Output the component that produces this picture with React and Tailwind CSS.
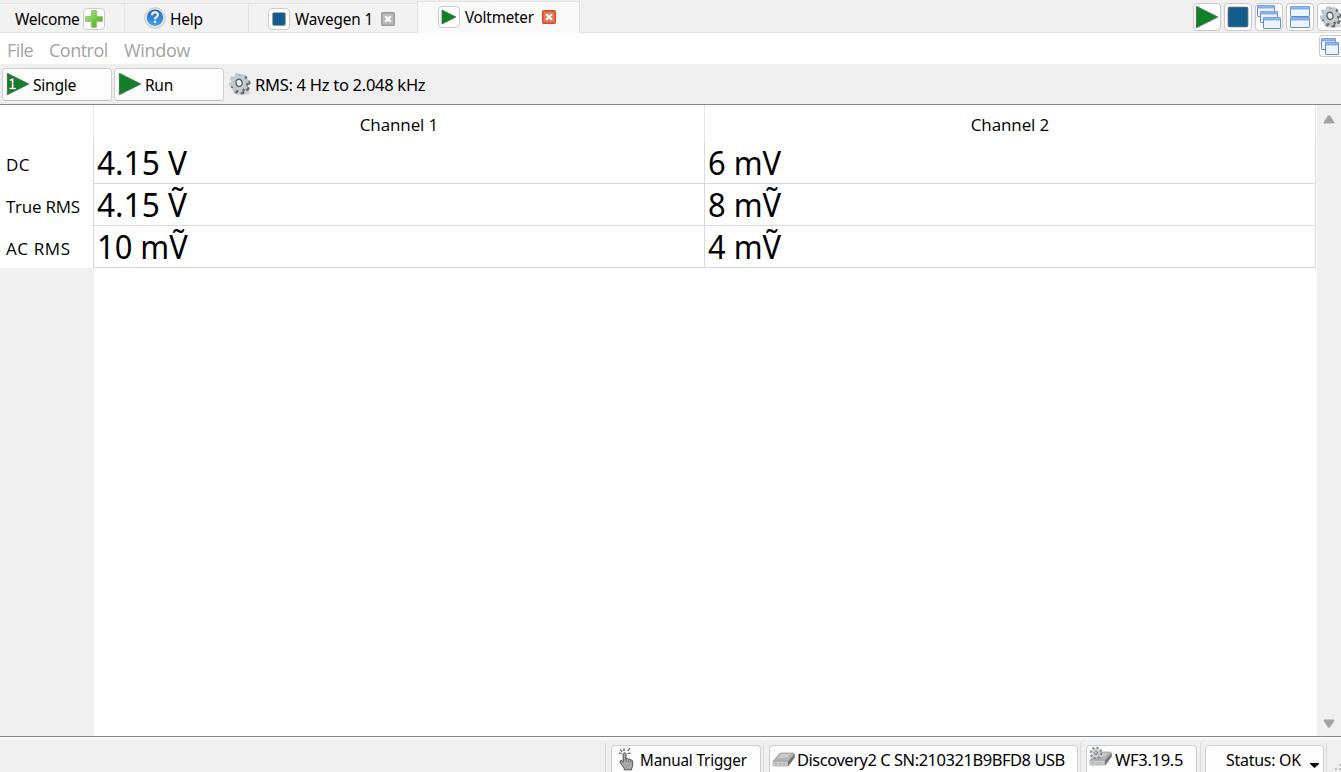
import React from "react";

const PlayIcon = ({ className, one }) => (
  <svg viewBox="0 0 24 24" className={className}>
    <path d="M1.5 1.5 L22.5 12 L1.5 22.5 Z" fill="#118128" stroke="#3f7a4c" strokeWidth="1.2" strokeLinejoin="round" />
    {one && (
      <g fill="none">
        <path d="M3.6 8.1 L6.6 7.2 V16 M3 16.6 H10" stroke="#2d5a35" strokeWidth="3.2" />
        <path d="M3.9 8.2 L6.6 7.3 V16 M3.4 16.5 H9.8" stroke="#fff" strokeWidth="1.7" />
      </g>
    )}
  </svg>
);

const StopIcon = ({ className }) => (
  <svg viewBox="0 0 24 24" className={className}>
    <rect x="1.5" y="1.5" width="21" height="21" rx="1.5" fill="#125d8d" stroke="#46657a" strokeWidth="1.5" />
  </svg>
);

const teeth = [0, 45, 90, 135, 180, 225, 270, 315];
const GearIcon = ({ className }) => (
  <svg viewBox="0 0 24 24" className={className}>
    <ellipse cx="14" cy="20.8" rx="8.5" ry="2.2" fill="#b9b9b9" opacity="0.6" />
    <g transform="rotate(-12 12.6 12.4)">
      {teeth.map((a) => (
        <rect key={a} x="10.6" y="2.4" width="4" height="4.6" rx="1" fill="#646b71" transform={`rotate(${a} 12.6 12.4)`} />
      ))}
      <circle cx="12.6" cy="12.4" r="5.6" fill="none" stroke="#646b71" strokeWidth="4" />
    </g>
    <g transform="rotate(-12 10.8 10.8)">
      {teeth.map((a) => (
        <rect key={a} x="8.7" y="1" width="4.2" height="4.6" rx="0.9" fill="#c0c7cc" transform={`rotate(${a} 10.8 10.8)`} />
      ))}
      <circle cx="10.8" cy="10.8" r="5.3" fill="none" stroke="#c4cbd0" strokeWidth="4.2" />
      <ellipse cx="11" cy="10.9" rx="3" ry="3.6" fill="#f4f4f4" stroke="#596169" strokeWidth="1.3" />
    </g>
  </svg>
);

const Pane = ({ x, y, w, h }) => (
  <g>
    <rect x={x + 0.5} y={y + 0.5} width={w - 1} height={h - 1} rx="0.6" fill="#edf4fc" stroke="#6389ce" />
    <rect x={x + 0.5} y={y + 0.5} width={w - 1} height="2.4" rx="0.6" fill="#8db8f0" stroke="#7ba2e0" />
  </g>
);
const CascadeIcon = () => (
  <svg viewBox="0 0 24 24" className="h-6 w-6 shrink-0">
    <Pane x={0} y={0} w={18} h={12} />
    <Pane x={3} y={6} w={18} h={12} />
    <Pane x={6} y={12} w={18} h={12} />
  </svg>
);
const TileIcon = () => (
  <svg viewBox="0 0 20 22" className="h-[22px] w-5 shrink-0">
    <Pane x={0} y={0} w={20} h={11} />
    <Pane x={0} y={11} w={20} h={11} />
  </svg>
);
const RestoreIcon = () => (
  <svg viewBox="0 0 18 17" className="h-[17px] w-[18px] shrink-0">
    <Pane x={0} y={0} w={15} h={12} />
    <Pane x={4} y={4} w={14} h={13} />
  </svg>
);

const PlusIcon = () => (
  <svg viewBox="0 0 18 18" className="h-[18px] w-[18px]">
    <defs>
      <linearGradient id="plus" x2="1" y2="1">
        <stop offset="0" stopColor="#b4eb84" />
        <stop offset="1" stopColor="#40a40c" />
      </linearGradient>
    </defs>
    <path d="M6.7.7h4.6v6h6v4.6h-6v6H6.7v-6h-6V6.7h6z" fill="url(#plus)" stroke="#80be61" strokeLinejoin="round" />
  </svg>
);

const HelpIcon = () => (
  <svg viewBox="0 0 22 22" className="-mt-0.5 h-[22px] w-[22px] shrink-0">
    <defs>
      <linearGradient id="help" x2="0" y2="1">
        <stop offset="0" stopColor="#2a66b4" />
        <stop offset="1" stopColor="#3aa0ee" />
      </linearGradient>
    </defs>
    <circle cx="11" cy="11" r="10.3" fill="#e6e6e6" stroke="#c8c8c8" />
    <circle cx="11" cy="10.6" r="8.2" fill="url(#help)" />
    <path d="M8 8.2c.1-3.8 6-3.8 5.9-.3 0 2-2.9 2.1-2.9 4.4" fill="none" stroke="#fff" strokeWidth="2.1" />
    <rect x="9.9" y="13.6" width="2.3" height="2.3" fill="#fff" />
  </svg>
);

const CloseIcon = ({ red }) => (
  <svg viewBox="0 0 14 14" className="-mt-px h-3.5 w-3.5 shrink-0">
    <rect x=".7" y=".7" width="12.6" height="12.6" rx="1.2" fill={red ? "#df7c55" : "#b9b9b9"} stroke={red ? "#d9442e" : "#9b9b9b"} strokeWidth="1.4" />
    <path d="M4.2 4.2l5.6 5.6M9.8 4.2L4.2 9.8" stroke="#fff" strokeWidth="2.2" />
  </svg>
);

const HandIcon = () => (
  <svg viewBox="0 0 17 24" className="-mt-0.5 h-6 w-[17px] shrink-0">
    <path d="M6 1.2v3M2.2 2.5l2 2.2M1 6.3h2.6M12 1.2L9.6 4M9.5 6.3h3" stroke="#444" strokeWidth="1.1" fill="none" />
    <path d="M5.2 7.2c0-2 2.8-2 2.8 0v5c.5-1.2 2.2-1 2.5.2.6-.8 2-.5 2.2.7.7-.5 2 .1 2 1.3v4.2c0 1.5-1.2 2-1.2 3.4v.8H6.3v-1C5.8 19.5 3 18 2.2 15.5c-.7-1.6.7-2.7 1.8-1.7l1.2 1.6z" fill="#a8a8a8" stroke="#505050" />
    <path d="M8 12v3M10.5 12.6v2.5M12.7 13.3v2.2" stroke="#606060" strokeWidth=".8" />
  </svg>
);

const DevicePaths = () => (
  <g>
    <path d="M1 9.3L7.5 1.6Q8 1 9 1H21q1.5 0 1 1L16 9.3z" fill="#b4b4b4" stroke="#9c9c9c" strokeWidth=".7" />
    <path d="M1 9.3h15V14H2.2Q1 14 1 13z" fill="#cecece" stroke="#9b9b9b" strokeWidth=".7" />
    <path d="M16 9.3L22.8 1.6v4L17 13.4l-1 .6z" fill="#747474" />
    <path d="M6 6L9.5 2h9l-3 3.5z" fill="#cccccc" />
    <path d="M3 11.5h2" stroke="#61b779" strokeWidth="1.2" />
    <path d="M6.5 11.8H14" stroke="#aaa" strokeWidth=".8" />
  </g>
);

const Corner = () => (
  <svg viewBox="0 0 7 7" className="mb-px h-[7px] w-[7px] self-end">
    <path d="M5 0h2v2H5zM1 4h2v2H1zM5 4h2v2H5z" fill="#bdbdbd" />
  </svg>
);

const ToolButton = ({ children }) => (
  <div className="flex h-7 w-7 shrink-0 items-center justify-center rounded border border-[#c9c9c9] bg-[#fdfdfd]">{children}</div>
);
const TabBadge = ({ children }) => (
  <span className="flex h-[22px] w-[22px] shrink-0 items-center justify-center rounded border border-[#cccccc] bg-white">{children}</span>
);

function TabBar() {
  return (
    <div className="flex h-[33px] shrink-0 items-end bg-[#efefef]">
      <div className="flex h-[30px] w-[125px] shrink-0 items-center border-y border-r border-[#e1e1e1] bg-[#f2f2f2] pt-0.5 pl-[15px]">
        <span className="w-[68px] origin-left scale-x-[0.94] tracking-[-0.38px]">Welcome</span>
        <TabBadge><PlusIcon /></TabBadge>
      </div>
      <div className="flex h-[30px] w-[124px] shrink-0 items-center border-y border-r border-[#e1e1e1] bg-[#f2f2f2] pt-0.5 pl-[19px]">
        <HelpIcon />
        <span className="ml-1 origin-left scale-x-[0.94] tracking-[-0.3px]">Help</span>
      </div>
      <div className="flex h-[30px] w-[168px] shrink-0 items-center border-y border-[#e1e1e1] bg-[#f2f2f2] pt-0.5 pl-[19px]">
        <TabBadge><StopIcon className="h-3.5 w-3.5" /></TabBadge>
        <span className="ml-[5px] w-[86px] origin-left scale-x-[0.925] tracking-[-0.1px]">Wavegen 1</span>
        <CloseIcon />
      </div>
      <div className="flex h-8 w-[163px] shrink-0 items-center border-x border-t border-[#e1e1e1] bg-[#f9f9f9] pb-px pl-5">
        <TabBadge><PlayIcon className="h-4 w-4" /></TabBadge>
        <span className="ml-[5px] w-[77px] origin-left scale-x-[0.92] tracking-[-0.2px]">Voltmeter</span>
        <CloseIcon red />
      </div>
      <div className="flex h-[33px] min-w-0 flex-1 justify-end border-b border-[#e1e1e1] pt-[3px]">
        <div className="-mr-1 flex gap-[3px]">
          <ToolButton><PlayIcon className="h-6 w-6 shrink-0" /></ToolButton>
          <ToolButton><StopIcon className="h-[22px] w-[22px] shrink-0" /></ToolButton>
          <ToolButton><CascadeIcon /></ToolButton>
          <ToolButton><TileIcon /></ToolButton>
          <ToolButton><GearIcon className="h-6 w-6 shrink-0" /></ToolButton>
        </div>
      </div>
    </div>
  );
}

const rows = [
  { name: "DC", label: "tracking-[0.4px]", a: "4.15 V", b: "6 mV" },
  { name: "True RMS", label: "tracking-[-0.25px]", a: "4.15 Ṽ", b: "8 mṼ" },
  { name: "AC RMS", label: "tracking-[0.6px]", a: "10 mṼ", b: "4 mṼ" },
];

function Reading({ text }) {
  return (
    <div className="flex h-[42px] items-center border-r border-b border-[#d9d9d9] pt-px pl-[3px] text-[32px] leading-[40px] whitespace-pre">
      <span className={text.includes("m") ? "origin-left scale-x-[0.965]" : "origin-left scale-x-[0.99]"}>{text}</span>
    </div>
  );
}

function Readings() {
  return (
    <div className="flex min-h-0 flex-1">
      <div className="flex w-[93px] shrink-0 flex-col bg-[#f0f0f0]">
        <div className="h-[37px] bg-white" />
        {rows.map(({ name, label }) => (
          <div key={name} className="flex h-[42px] items-center bg-white pt-[3px] pl-1.5 font-['Open_Sans','Noto_Sans',sans-serif] text-[17px]">
            <span className={label}>{name}</span>
          </div>
        ))}
      </div>
      <div className="flex flex-1 flex-col bg-white">
        <div className="grid grid-cols-[612px_611px] content-start">
          <div className="flex h-[37px] items-center justify-center border-r border-l border-[#e5e5e5] pt-0.5 font-['Open_Sans','Noto_Sans',sans-serif] text-[17px] tracking-[-0.1px]">Channel 1</div>
          <div className="flex h-[37px] items-center justify-center border-r border-[#e5e5e5] pt-0.5 font-['Open_Sans','Noto_Sans',sans-serif] text-[17px] tracking-[-0.1px]">Channel 2</div>
          {rows.map(({ name, a, b }) => (
            <React.Fragment key={name}>
              <div className="border-l border-[#d9d9d9]"><Reading text={a} /></div>
              <Reading text={b} />
            </React.Fragment>
          ))}
        </div>
        <div className="flex-1 border-l border-[#f0f0f0]" />
      </div>
      <div className="flex w-6 shrink-0 flex-col items-center justify-between bg-[#f0f0f0] pt-[10px] pb-2">
        <svg viewBox="0 0 12 9" className="h-[9px] w-3"><path d="M5 .5h2l4.5 7-.5 1H1l-.5-1z" fill="#a3a3a3" /></svg>
        <svg viewBox="0 0 12 9" className="h-[9px] w-3"><path d="M5 8.5h2l4.5-7-.5-1H1l-.5 1z" fill="#a3a3a3" /></svg>
      </div>
    </div>
  );
}

function StatusBar() {
  const box = "flex h-[27px] shrink-0 items-center rounded-t border border-b-0 border-[#cecece] bg-[#fdfdfd] pt-0.5";
  return (
    <div className="flex h-[35px] shrink-0 items-end overflow-hidden border-t-[3px] border-[#f7f7f7] bg-[#efefef]">
      <div className="ml-[605px] h-[29px] w-px shrink-0 bg-[#d9d9d9]" />
      <div className={`${box} ml-[5px] w-[150px] pl-1.5`}>
        <HandIcon />
        <span className="ml-[5px] origin-left scale-x-[0.92] whitespace-nowrap tracking-[-0.15px]">Manual Trigger</span>
      </div>
      <div className="ml-0.5 h-[29px] w-px shrink-0 bg-[#d9d9d9]" />
      <div className={`${box} ml-[5px] w-[309px] pl-0.5`}>
        <svg viewBox="0 0 24 16" className="h-4 w-6 shrink-0"><DevicePaths /></svg>
        <span className="ml-px whitespace-nowrap tracking-[-0.47px]">Discovery2 C SN:210321B9BFD8 USB</span>
      </div>
      <div className="ml-0.5 h-[29px] w-px shrink-0 bg-[#d9d9d9]" />
      <div className={`${box} ml-[5px] w-[111px] pl-0.5`}>
        <svg viewBox="0 0 25 22" className="mb-1.5 h-[22px] w-[25px] shrink-0">
          <g transform="translate(0 5)"><DevicePaths /></g>
          <g transform="translate(1 1)" fill="none" stroke="#7c8388">
            <circle cx="6" cy="6" r="5" strokeWidth="2.5" strokeDasharray="2 1.9" />
            <circle cx="6" cy="6" r="3.2" stroke="#c8cdd1" strokeWidth="2.5" />
            <circle cx="6" cy="6" r="1.5" />
          </g>
        </svg>
        <span className="ml-px tracking-[-0.3px]">WF3.19.5</span>
      </div>
      <div className="ml-[3px] h-[29px] w-px shrink-0 bg-[#d9d9d9]" />
      <div className={`${box} ml-1 w-[119px] pl-5`}>
        <span className="w-[84px] origin-left scale-x-[0.965] whitespace-nowrap tracking-[-0.25px]">Status: OK</span>
        <svg viewBox="0 0 9 5" className="mt-2.5 h-[5px] w-[9px]"><path d="M0 0h9v1L4.5 5 0 1z" fill="#000" /></svg>
      </div>
      <div className="ml-0.5 h-[29px] w-px shrink-0 bg-[#d9d9d9]" />
      <div className="flex h-[29px] flex-1 justify-end"><Corner /></div>
    </div>
  );
}

export default function App() {
  const button = "ml-0.5 flex h-[33px] w-[110px] items-center rounded border border-[#cecece] border-b-[#bdbdbd] bg-[#fdfdfd]";
  return (
    <div className="flex h-[772px] w-[1341px] flex-col overflow-hidden bg-white font-['Noto_Sans',sans-serif] text-[16.5px] leading-5 text-black">
      <TabBar />
      <div className="flex h-[31px] shrink-0 items-center justify-between pl-[7px] font-['Open_Sans','Noto_Sans',sans-serif] text-[18px] text-[#a3a3a3]">
        <div className="flex pt-0.5">
          <span className="w-[42px] tracking-[-0.6px]">File</span>
          <span className="w-[75px] tracking-[-0.5px]">Control</span>
          <span className="tracking-[-0.3px]">Window</span>
        </div>
        <div className="-mt-[5px] flex h-[22px] w-[22px] items-center rounded-l border border-r-0 border-[#c9c9c9] bg-white pl-px"><RestoreIcon /></div>
      </div>
      <div className="flex h-[41px] shrink-0 items-center border-b border-[#848890] bg-[#efefef]">
        <div className={`${button} pl-[3px]`}>
          <PlayIcon one className="-mt-px h-6 w-6" />
          <span className="mt-px ml-[3px] origin-left scale-x-[0.95] tracking-[-0.3px]">Single</span>
        </div>
        <div className={`${button} pl-[3px]`}>
          <PlayIcon className="-mt-px h-6 w-6" />
          <span className="mt-px ml-[3px] origin-left scale-x-[0.94] tracking-[-0.3px]">Run</span>
        </div>
        <GearIcon className="ml-1 h-6 w-6" />
        <span className="mt-0.5 ml-[3px] tracking-[-0.28px]">RMS: 4 Hz to 2.048 kHz</span>
      </div>
      <Readings />
      <div className="h-px shrink-0 bg-[#848890]" />
      <StatusBar />
    </div>
  );
}
